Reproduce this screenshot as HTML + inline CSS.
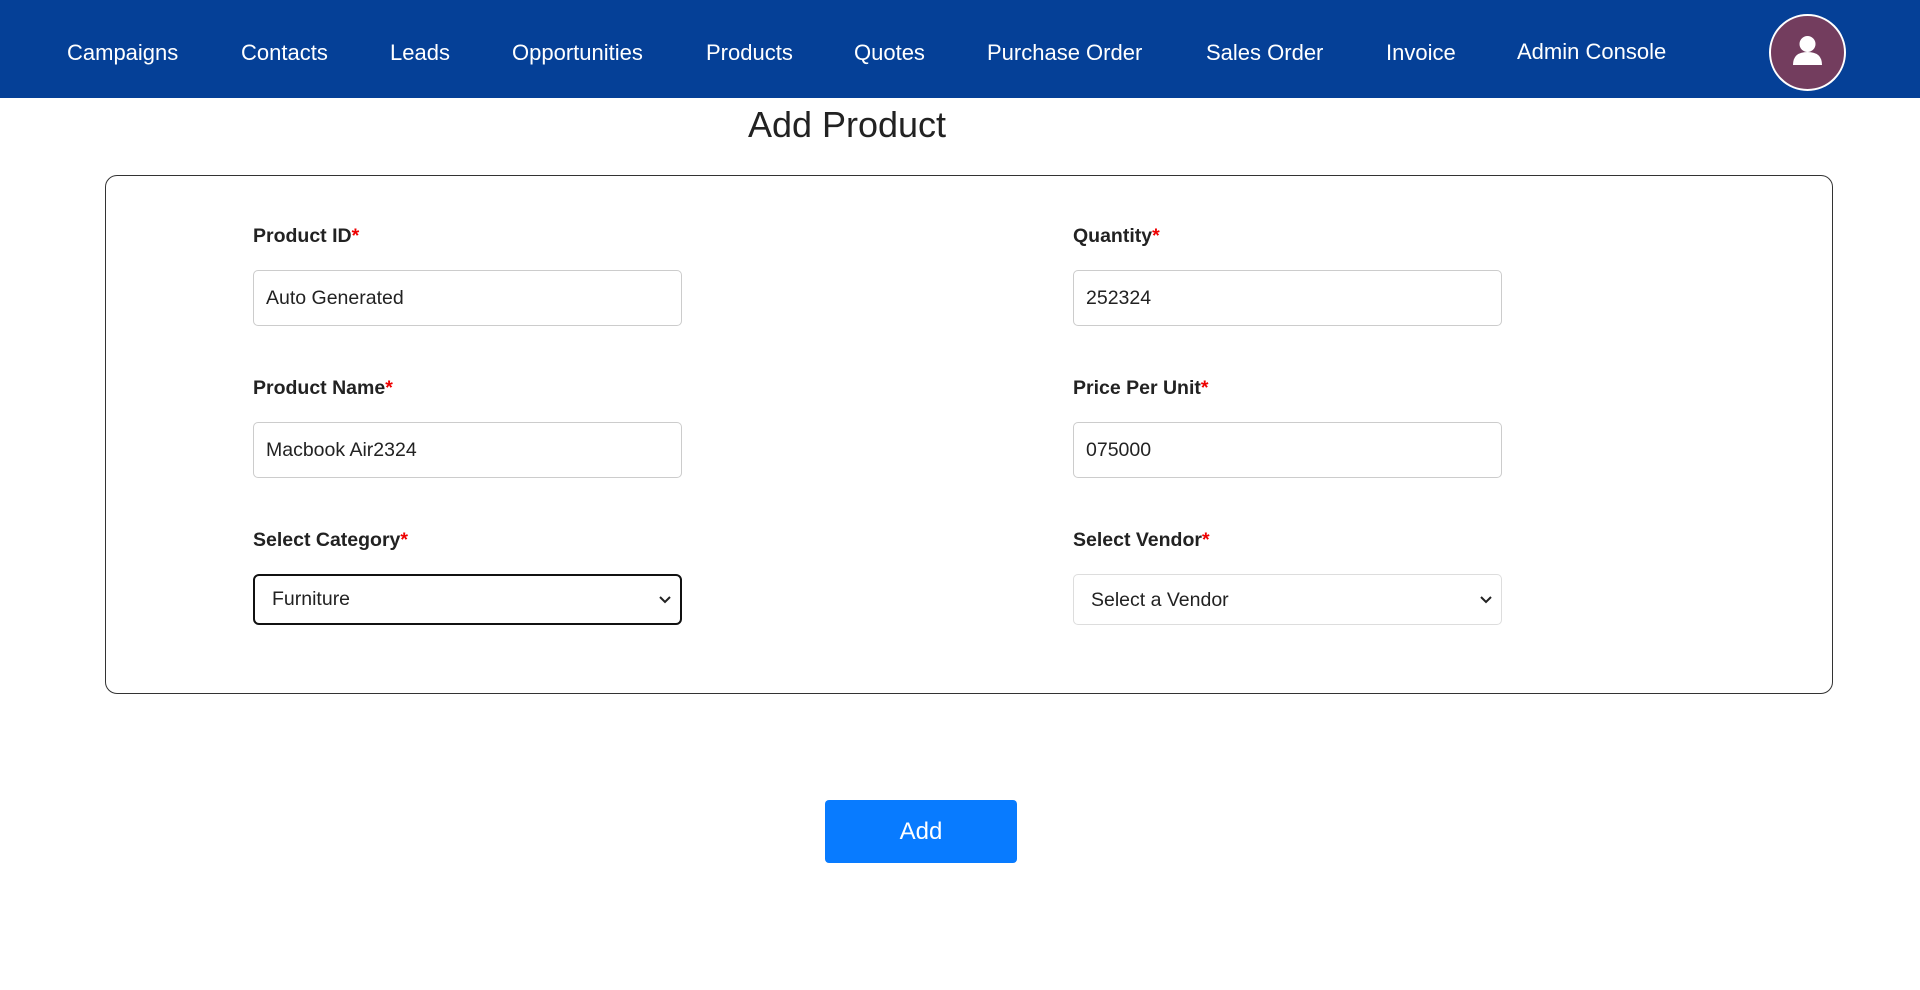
<!DOCTYPE html>
<html><head><meta charset="utf-8"><style>
*{box-sizing:border-box;margin:0;padding:0}
body{width:1920px;height:990px;background:#fff;font-family:"Liberation Sans",Arial,sans-serif;color:#222;position:relative;overflow:hidden}
.nav{position:absolute;left:0;top:0;width:1920px;height:98px;background:#054097}
.nav span{position:absolute;top:39.5px;color:#fff;font-size:22px;line-height:26px;white-space:nowrap}
.av{position:absolute;left:1769px;top:14px;width:77px;height:77px;border-radius:50%;background:#733d5e;border:2px solid #fff}
h1{position:absolute;left:0;width:1694px;text-align:center;top:104px;font-weight:normal;font-size:36px;line-height:42px;color:#222}
.card{position:absolute;left:105px;top:175px;width:1728px;height:519px;border:1px solid #333;border-radius:12px}
.lbl{position:absolute;font-weight:bold;font-size:19.5px;line-height:22px;color:#222}
.lbl b{color:#e00;font-weight:bold}
.in{position:absolute;width:429px;height:56px;border:1px solid #ccc;border-radius:5px;font-size:19.5px;line-height:54px;padding-left:12px;color:#222}
.sel{position:absolute;width:429px;height:51px;border:1px solid #ddd;border-radius:5px;font-size:19.5px;line-height:50px;padding-left:17px;color:#222}
.sel.f{border:2.5px solid #111;border-radius:6px;line-height:47px}
.sel svg{position:absolute;right:8px;top:50%;margin-top:-6px}
.btn{position:absolute;left:825px;top:800px;width:192px;height:63px;background:#087bff;border-radius:4px;color:#fff;font-size:24px;line-height:63px;text-align:center}
</style></head><body>
<div class="nav">
<span style="left:67px">Campaigns</span>
<span style="left:241px">Contacts</span>
<span style="left:390px">Leads</span>
<span style="left:512px">Opportunities</span>
<span style="left:706px">Products</span>
<span style="left:854px">Quotes</span>
<span style="left:987px">Purchase Order</span>
<span style="left:1206px">Sales Order</span>
<span style="left:1386px">Invoice</span>
<span style="left:1517px;top:38.5px">Admin Console</span>
<div class="av"><svg width="73" height="73" viewBox="0 0 73 73"><circle cx="36.5" cy="28" r="8" fill="#fff"/><path d="M22 49 Q22 36 36.5 36 Q51 36 51 49 Z" fill="#fff"/></svg></div>
</div>
<h1>Add Product</h1>
<div class="card"></div>
<div class="lbl" style="left:253px;top:225px">Product ID<b>*</b></div>
<div class="in" style="left:253px;top:270px">Auto Generated</div>
<div class="lbl" style="left:1073px;top:225px">Quantity<b>*</b></div>
<div class="in" style="left:1073px;top:270px">252324</div>
<div class="lbl" style="left:253px;top:377px">Product Name<b>*</b></div>
<div class="in" style="left:253px;top:422px">Macbook Air2324</div>
<div class="lbl" style="left:1073px;top:377px">Price Per Unit<b>*</b></div>
<div class="in" style="left:1073px;top:422px">075000</div>
<div class="lbl" style="left:253px;top:529px">Select Category<b>*</b></div>
<div class="sel f" style="left:253px;top:574px">Furniture<svg width="14" height="12" viewBox="0 0 14 12"><path d="M2 3 L7 8 L12 3" fill="none" stroke="#222" stroke-width="2"/></svg></div>
<div class="lbl" style="left:1073px;top:529px">Select Vendor<b>*</b></div>
<div class="sel" style="left:1073px;top:574px">Select a Vendor<svg width="14" height="12" viewBox="0 0 14 12"><path d="M2 3 L7 8 L12 3" fill="none" stroke="#222" stroke-width="2"/></svg></div>
<div class="btn">Add</div>
</body></html>
